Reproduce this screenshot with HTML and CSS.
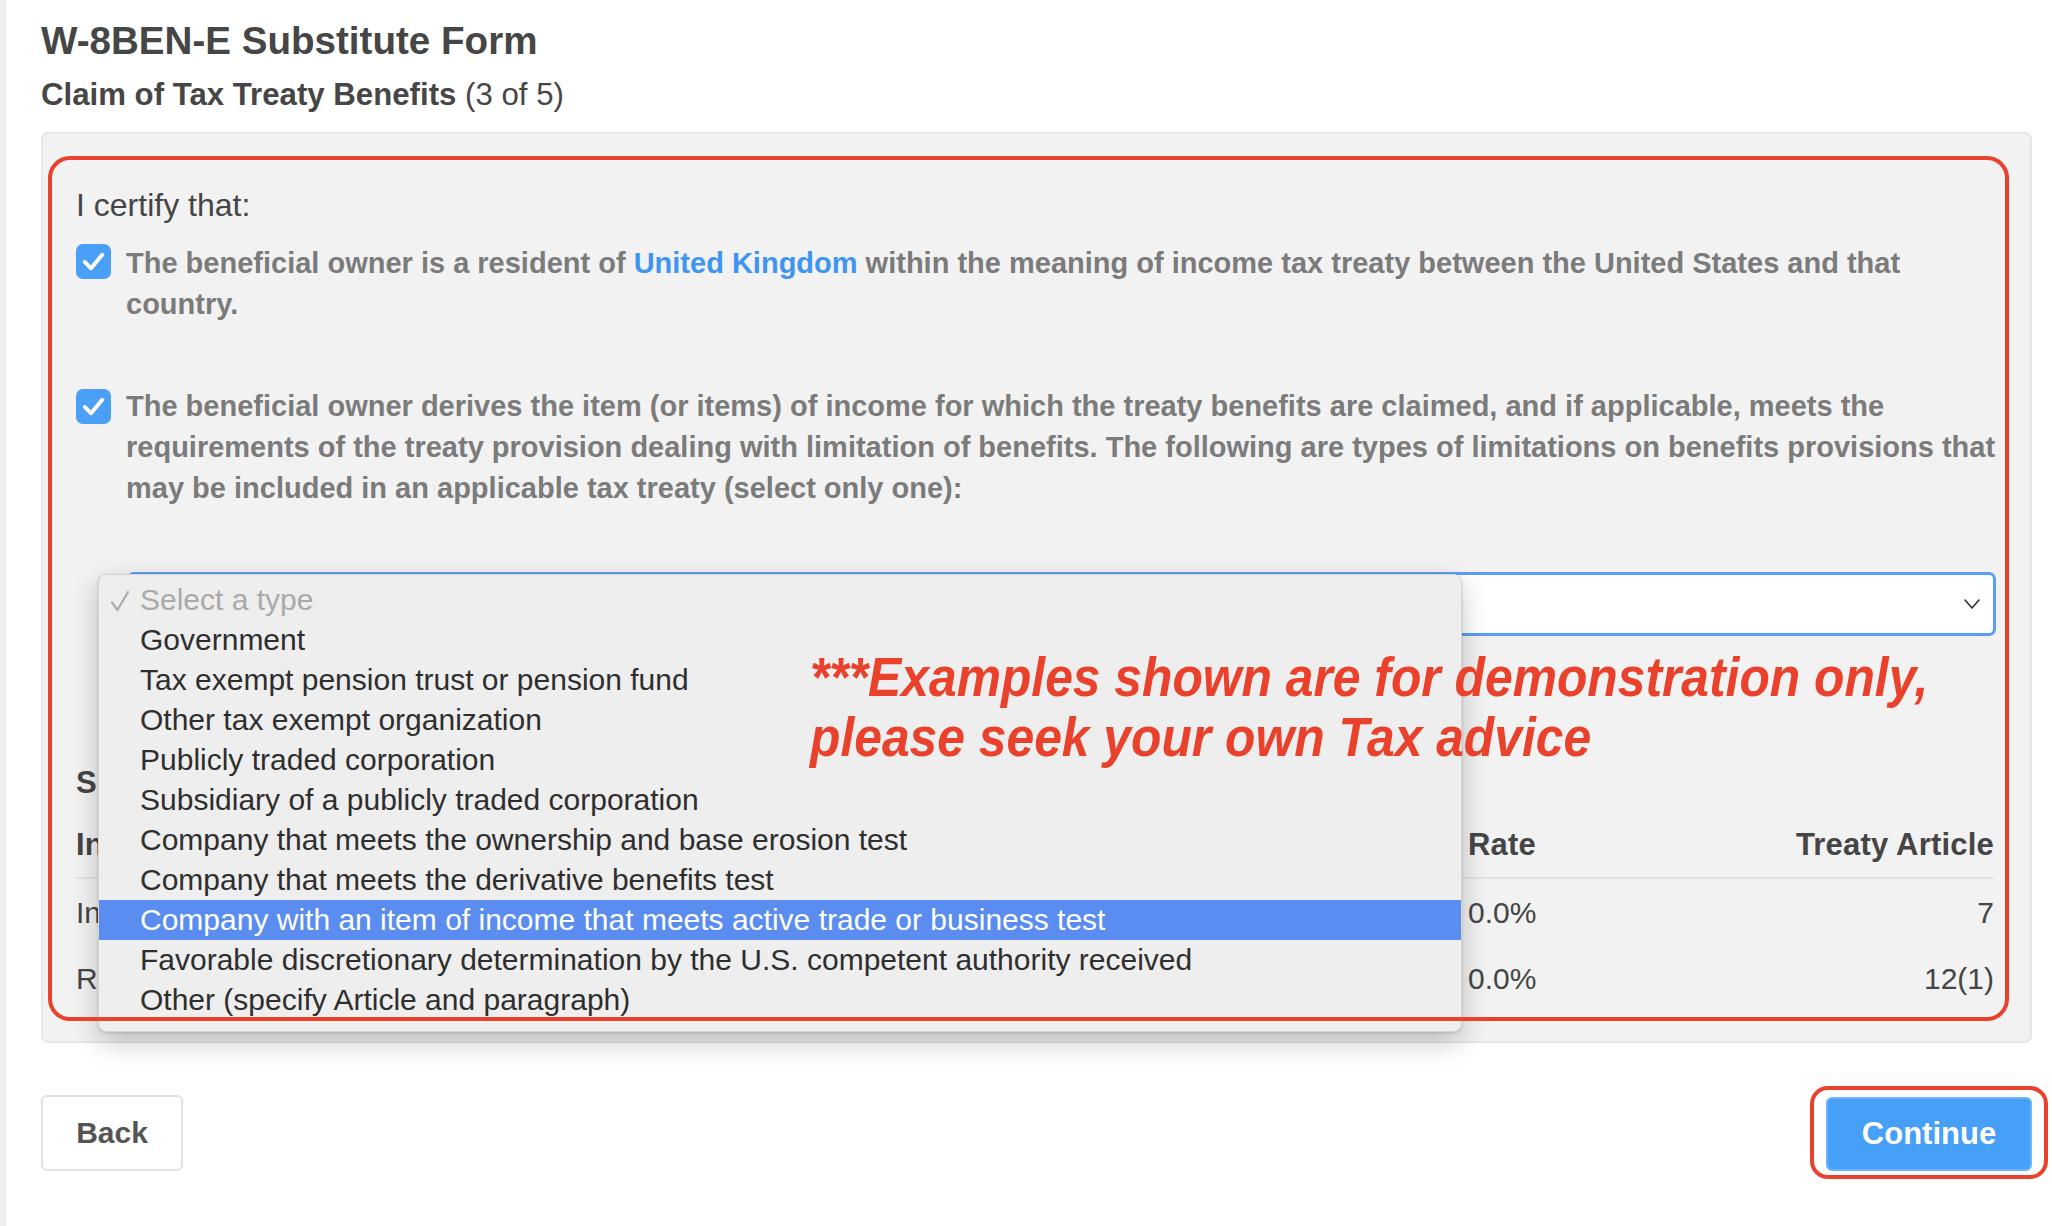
FILE: index.html
```html
<!DOCTYPE html>
<html lang="en">
<head>
<meta charset="utf-8">
<title>W-8BEN-E Substitute Form</title>
<link rel="stylesheet" href="styles.css">
</head>
<body>
<div class="page">
  <h1 class="title">W-8BEN-E Substitute Form</h1>
  <h2 class="subtitle"><strong>Claim of Tax Treaty Benefits</strong> (3 of 5)</h2>

  <section class="card">
    <p class="lead">I certify that:</p>

    <div class="cert">
      <span class="checkbox"><svg viewBox="0 0 36 36" width="35" height="35"><path d="M9 18.5 L15.5 25 L27 11" fill="none" stroke="#fff" stroke-width="4" stroke-linecap="round" stroke-linejoin="round"/></svg></span>
      <p class="cert-text">The beneficial owner is a resident of <a class="link">United Kingdom</a> within the meaning of income tax treaty between the United States and that country.</p>
    </div>

    <div class="cert cert-second">
      <span class="checkbox"><svg viewBox="0 0 36 36" width="35" height="35"><path d="M9 18.5 L15.5 25 L27 11" fill="none" stroke="#fff" stroke-width="4" stroke-linecap="round" stroke-linejoin="round"/></svg></span>
      <p class="cert-text">The beneficial owner derives the item (or items) of income for which the treaty benefits are claimed, and if applicable, meets the requirements of the treaty provision dealing with limitation of benefits. The following are types of limitations on benefits provisions that may be included in an applicable tax treaty (select only one):</p>
    </div>

    <div class="select-wrap">
      <div class="select">
        <svg class="chevron" viewBox="0 0 16 10" width="16" height="10"><path d="M1 1 L8 9 L15 1" fill="none" stroke="#333" stroke-width="1.6" stroke-linecap="round" stroke-linejoin="round"/></svg>
      </div>
      <ul class="menu">
        <li class="menu-item placeholder"><svg class="tick" viewBox="0 0 20 22" width="20" height="22"><path d="M2 12.5 L7.5 20 L18 2" fill="none" stroke="#ababab" stroke-width="2.2" stroke-linecap="round" stroke-linejoin="round"/></svg>Select a type</li>
        <li class="menu-item">Government</li>
        <li class="menu-item">Tax exempt pension trust or pension fund</li>
        <li class="menu-item">Other tax exempt organization</li>
        <li class="menu-item">Publicly traded corporation</li>
        <li class="menu-item">Subsidiary of a publicly traded corporation</li>
        <li class="menu-item">Company that meets the ownership and base erosion test</li>
        <li class="menu-item">Company that meets the derivative benefits test</li>
        <li class="menu-item selected">Company with an item of income that meets active trade or business test</li>
        <li class="menu-item">Favorable discretionary determination by the U.S. competent authority received</li>
        <li class="menu-item">Other (specify Article and paragraph)</li>
      </ul>
    </div>

    <h3 class="section-title">Special rates and conditions</h3>
    <div class="rates">
      <div class="rates-row rates-head">
        <span>Income Type</span><span>Rate</span><span class="right">Treaty Article</span>
      </div>
      <div class="rates-row">
        <span>Income from business profits</span><span>0.0%</span><span class="right">7</span>
      </div>
      <div class="rates-row">
        <span>Royalties</span><span>0.0%</span><span class="right">12(1)</span>
      </div>
    </div>

    <div class="callout-box"></div>
    <p class="note">***Examples shown are for demonstration only,<br>please seek your own Tax advice</p>
  </section>

  <div class="actions">
    <button class="btn btn-back">Back</button>
    <div class="continue-wrap">
      <button class="btn btn-continue">Continue</button>
      <span class="ring"></span>
    </div>
  </div>
</div>
</body>
</html>
```

FILE: styles.css
```css
* { box-sizing: border-box; }

html, body {
  margin: 0;
  background: #ffffff;
  font-family: "Liberation Sans", Arial, Helvetica, sans-serif;
}

.page {
  border-left: 6px solid #efefef;
  padding: 18px 20px 0 35px;
  min-height: 1226px;
}

.title {
  margin: 0;
  font-size: 38.6px;
  line-height: 46px;
  font-weight: 700;
  color: #464646;
}

.subtitle {
  margin: 13px 0 0;
  font-size: 31.2px;
  line-height: 36px;
  font-weight: 400;
  color: #464646;
}
.subtitle strong { font-weight: 700; }

.card {
  position: relative;
  margin-top: 19px;
  background: #f2f2f2;
  border: 2px solid #e6e6e6;
  border-radius: 7px;
  padding: 51px 28px 30px 33px;
}

.lead {
  margin: 0;
  font-size: 32px;
  line-height: 40px;
  color: #454545;
}

.cert {
  display: flex;
  align-items: flex-start;
  gap: 15px;
  margin-top: 18px;
}
.cert-second { margin-top: 61px; }

.checkbox {
  flex: none;
  width: 35px;
  height: 35px;
  margin-top: 1px;
  border-radius: 7px;
  background: #4a9ff6;
  display: flex;
}
.cert-second .checkbox { margin-top: 3px; }

.cert-text {
  margin: 0;
  font-size: 29px;
  line-height: 41px;
  font-weight: 700;
  color: #7b7b7b;
}

.link { color: #3e95f1; }

.select-wrap {
  position: relative;
  margin: 63px 6px 0 51px;
}

.select {
  height: 64px;
  border: 3px solid #5d9df1;
  border-radius: 7px;
  background: #ffffff;
  display: flex;
  align-items: center;
  justify-content: flex-end;
  padding-right: 13px;
}

.menu {
  position: absolute;
  left: -29px;
  top: 2px;
  width: 1364px;
  margin: 0;
  padding: 5px 0 11px;
  list-style: none;
  background: #eeeeee;
  border: 1px solid #d6d6d6;
  border-radius: 8px;
  box-shadow: 0 10px 28px rgba(0, 0, 0, 0.22), 0 1px 3px rgba(0, 0, 0, 0.15);
  z-index: 2;
}

.menu-item {
  position: relative;
  height: 40px;
  line-height: 40px;
  padding-left: 41px;
  font-size: 30px;
  color: #2e2e2e;
  white-space: nowrap;
}
.menu-item.placeholder { color: #a9a9a9; }
.menu-item.selected { background: #5a8def; color: #ffffff; }

.tick {
  position: absolute;
  left: 11px;
  top: 10px;
}

.section-title {
  margin: 127px 0 0;
  font-size: 31px;
  line-height: 40px;
  font-weight: 700;
  color: #454545;
}

.rates { margin: 22px 8px 0 0; }

.rates-row {
  display: grid;
  grid-template-columns: 1392px 1fr auto;
  font-size: 30px;
  line-height: 40px;
  color: #454545;
  padding: 14px 0 12px;
}
.rates-head {
  font-size: 31px;
  font-weight: 700;
  letter-spacing: 0.2px;
  padding: 0 0 12px;
  border-bottom: 2px solid #e3e3e3;
}
.right { text-align: right; }

.callout-box {
  position: absolute;
  left: 5px;
  top: 22px;
  right: 21px;
  bottom: 20px;
  border: 4px solid #e9412b;
  border-radius: 22px;
  z-index: 3;
  pointer-events: none;
}

.note {
  position: absolute;
  left: 767px;
  top: 513px;
  margin: 0;
  font-size: 55px;
  line-height: 60px;
  font-weight: 700;
  font-style: italic;
  color: #e9412b;
  white-space: nowrap;
  transform: scaleX(0.905);
  transform-origin: left top;
  z-index: 4;
}

.actions {
  display: flex;
  justify-content: space-between;
  align-items: flex-end;
  margin-top: 52px;
}

.btn {
  font-family: "Liberation Sans", Arial, Helvetica, sans-serif;
  font-weight: 700;
  border-radius: 6px;
  cursor: pointer;
}

.btn-back {
  width: 142px;
  height: 76px;
  background: #ffffff;
  border: 2px solid #e2e2e2;
  color: #555555;
  font-size: 30px;
}

.continue-wrap { position: relative; }

.btn-continue {
  display: block;
  width: 206px;
  height: 74px;
  background: #47a0f7;
  border: 2px solid #6cb3fa;
  color: #ffffff;
  font-size: 31px;
}

.ring {
  position: absolute;
  left: -16px;
  right: -16px;
  top: -11px;
  bottom: -8px;
  border: 4px solid #e9412b;
  border-radius: 18px;
  pointer-events: none;
}
```
